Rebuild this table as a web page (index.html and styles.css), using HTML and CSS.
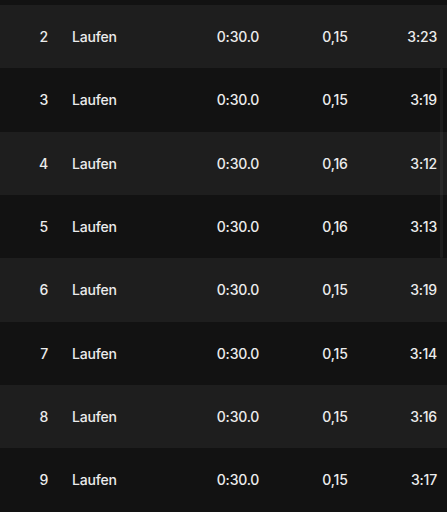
FILE: index.html
```html
<!DOCTYPE html>
<html lang="de">
<head>
  <meta charset="UTF-8">
  <meta name="viewport" content="width=device-width, initial-scale=1.0">
  <title>Intervalle</title>
  <link rel="stylesheet" href="styles.css">
</head>
<body>
  <!-- Intervall-Liste (gescrollt, Zeile 1 ist oben abgeschnitten) -->
  <div class="splits">
    <div class="split-row odd"></div>
    <div class="split-row even">
      <span class="num">2</span><span class="name">Laufen</span><span class="time">0:30.0</span><span class="dist">0,15</span><span class="pace">3:23</span>
    </div>
    <div class="split-row odd">
      <span class="num">3</span><span class="name">Laufen</span><span class="time">0:30.0</span><span class="dist">0,15</span><span class="pace">3:19</span>
    </div>
    <div class="split-row even">
      <span class="num">4</span><span class="name">Laufen</span><span class="time">0:30.0</span><span class="dist">0,16</span><span class="pace">3:12</span>
    </div>
    <div class="split-row odd">
      <span class="num">5</span><span class="name">Laufen</span><span class="time">0:30.0</span><span class="dist">0,16</span><span class="pace">3:13</span>
    </div>
    <div class="split-row even">
      <span class="num">6</span><span class="name">Laufen</span><span class="time">0:30.0</span><span class="dist">0,15</span><span class="pace">3:19</span>
    </div>
    <div class="split-row odd">
      <span class="num">7</span><span class="name">Laufen</span><span class="time">0:30.0</span><span class="dist">0,15</span><span class="pace">3:14</span>
    </div>
    <div class="split-row even">
      <span class="num">8</span><span class="name">Laufen</span><span class="time">0:30.0</span><span class="dist">0,15</span><span class="pace">3:16</span>
    </div>
    <div class="split-row odd">
      <span class="num">9</span><span class="name">Laufen</span><span class="time">0:30.0</span><span class="dist">0,15</span><span class="pace">3:17</span>
    </div>
  </div>

  <!-- Scroll indicator -->
  <div class="scroll-thumb"></div>
</body>
</html>
```

FILE: styles.css
```css
body, html {
  margin: 0;
  padding: 0;
  width: 100%;
  height: 100%;
  overflow: hidden;
  background: #121212;
  font-family: Inter, "Noto Sans", sans-serif;
  position: relative;
}

/* Split list */
.splits {
  margin-top: -58.333px;
}

.split-row {
  height: 63.333px;
  display: grid;
  grid-template-columns: 48px 150px 80px 114px 45px;
  padding-right: 10px;
  align-items: center;
  color: #ececec;
  font-size: 14px;
  font-weight: 500;
  letter-spacing: -0.2px;
  line-height: 1;
  padding-top: 1px;
  box-sizing: border-box;
}

.split-row.odd {
  background: #121212;
}

.split-row.even {
  background: #1e1e1e;
}

.num {
  text-align: right;
}

.name {
  padding-left: 24px;
}

.time,
.dist {
  text-align: center;
}

.pace {
  text-align: right;
}

/* Scroll indicator */
.scroll-thumb {
  position: absolute;
  top: 68px;
  left: 440px;
  width: 3px;
  height: 190px;
  border-radius: 2px;
  background: rgba(255, 255, 255, 0.05);
}
```
